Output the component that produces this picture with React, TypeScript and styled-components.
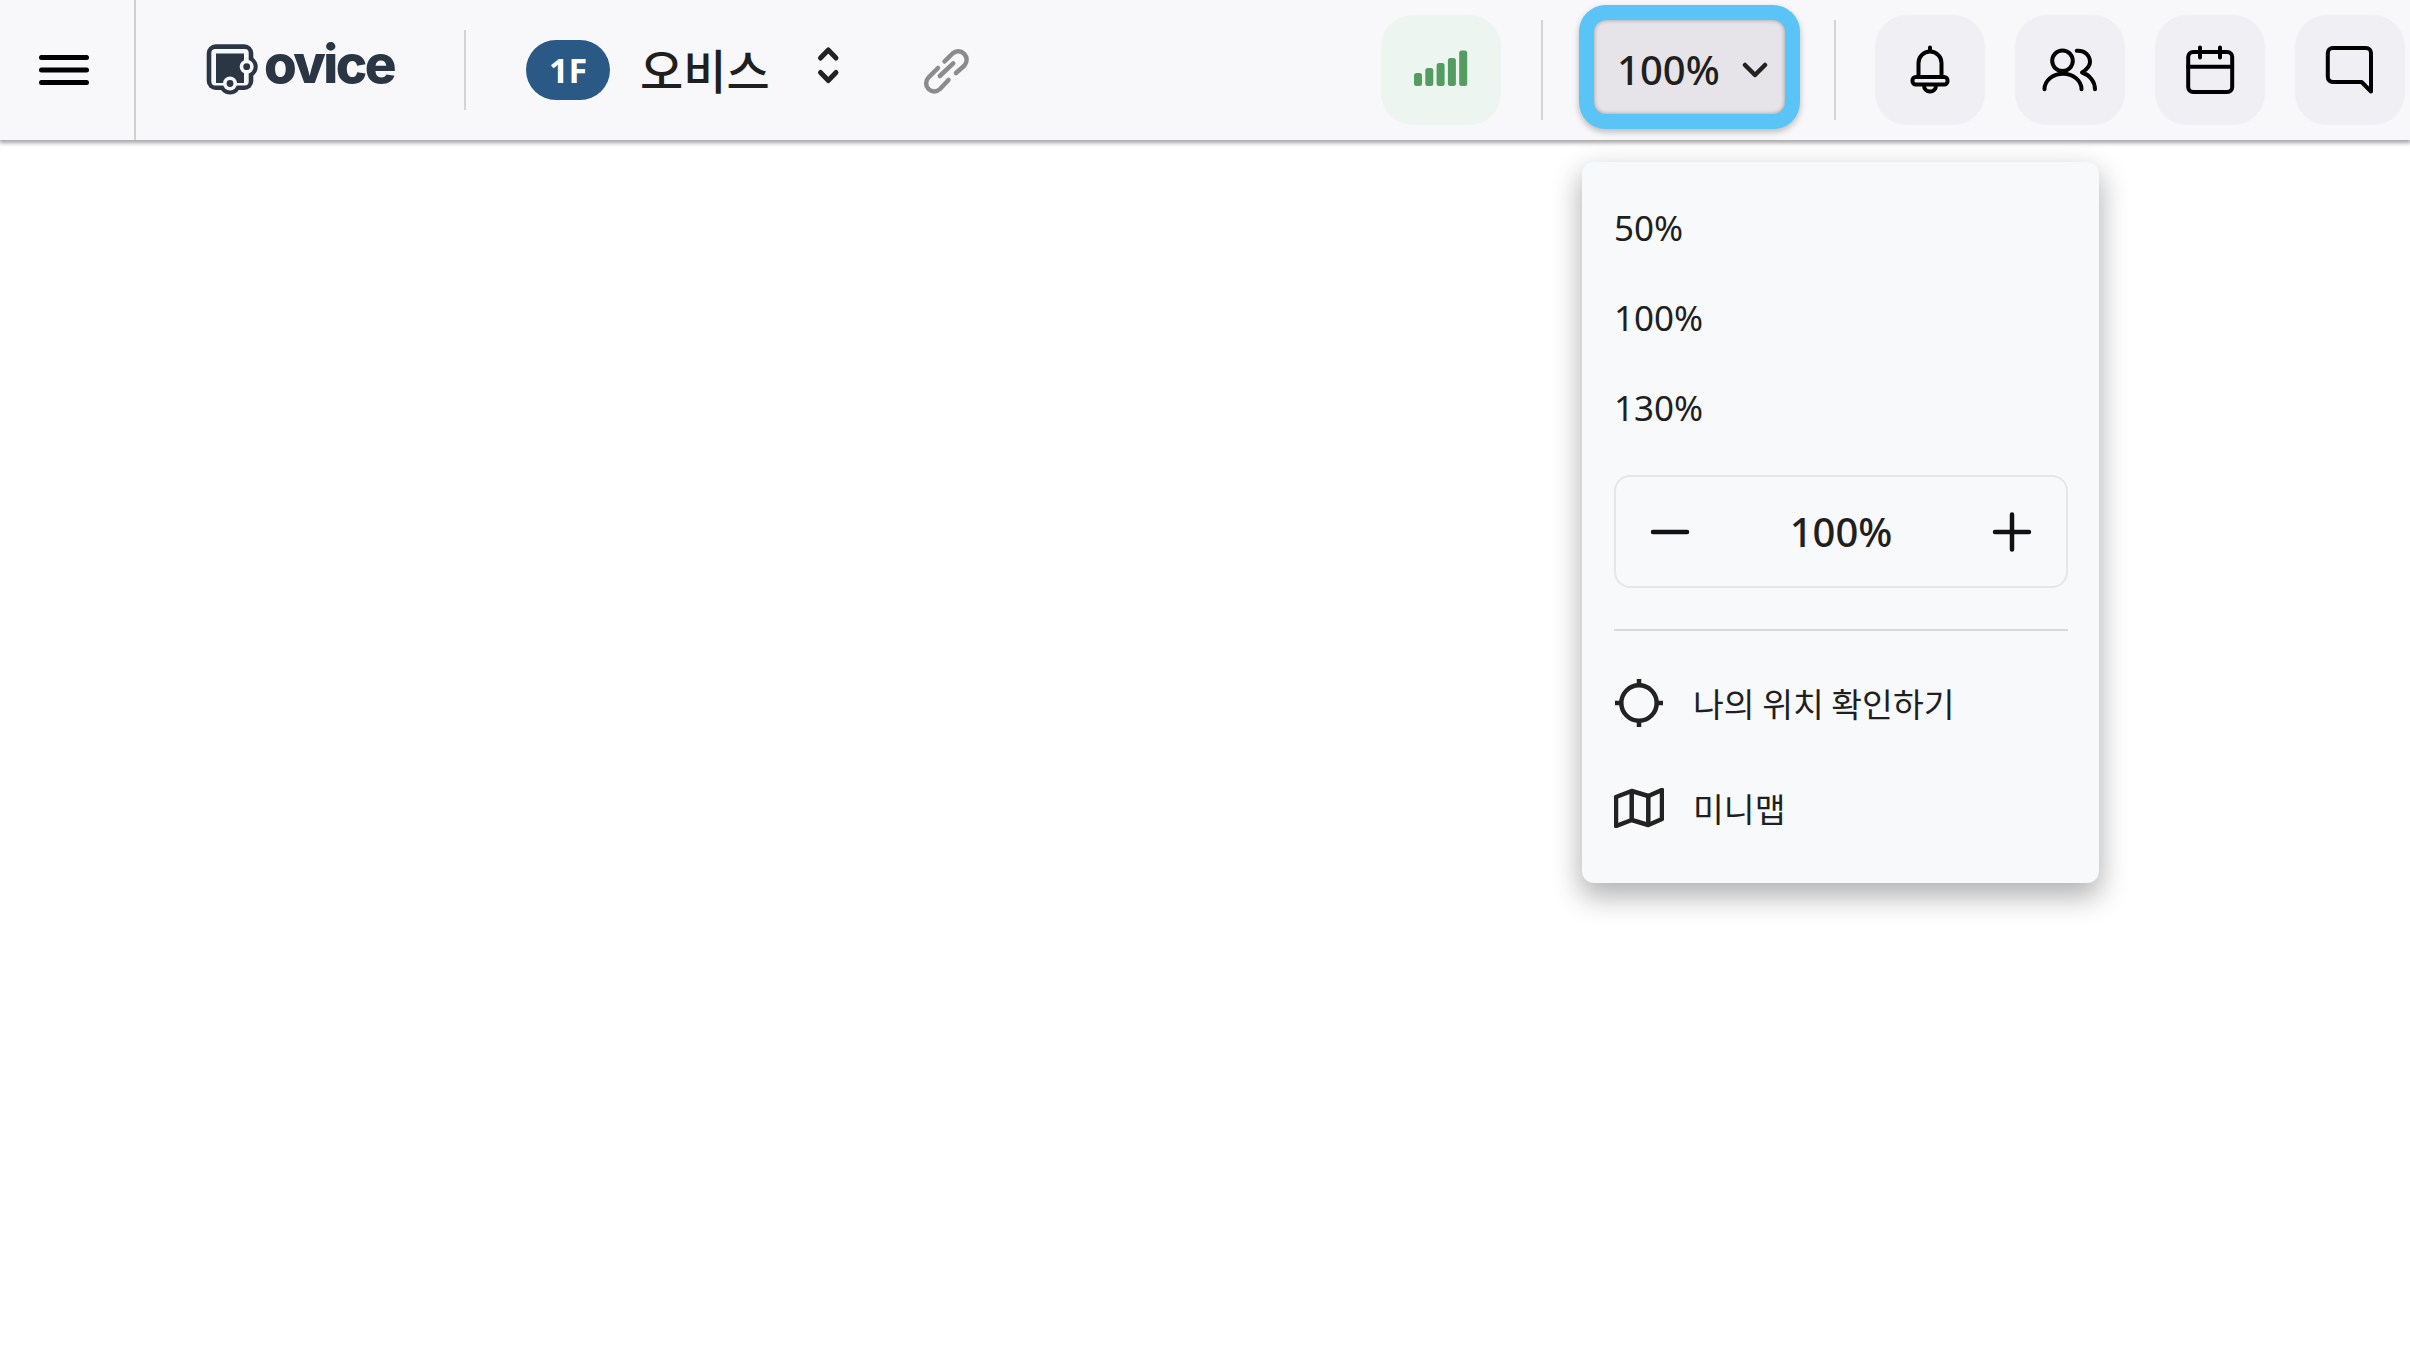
import styled, { createGlobalStyle } from "styled-components";

const GlobalStyle = createGlobalStyle`
  html, body {
    margin: 0;
    padding: 0;
    background: #fff;
    font-family: "Noto Sans", "Noto Sans CJK KR", sans-serif;
    color: #1f1f1f;
  }
`;

const Page = styled.div`
  width: 2410px;
  height: 1362px;
  overflow: hidden;
`;

const Header = styled.header`
  display: flex;
  align-items: center;
  justify-content: space-between;
  height: 140px;
  padding-right: 5px;
  background: #f8f8fb;
  box-shadow: 0 2px 4px 1px rgba(0, 0, 0, 0.35);
`;

const LeftGroup = styled.div`
  display: flex;
  align-items: center;
  height: 100%;
`;

const RightGroup = styled.div`
  display: flex;
  align-items: center;
  height: 100%;
`;

const MenuCell = styled.div`
  display: flex;
  align-items: center;
  justify-content: center;
  width: 128px;
  height: 100%;
  padding-right: 6px;
  border-right: 2px solid #cfcfcf;
`;

const Logo = styled.div`
  display: flex;
  align-items: flex-start;
  height: 52px;
  margin-left: 70px;
  width: 188px;
  flex-shrink: 0;
`;

const LogoMarkSvg = styled.svg`
  flex-shrink: 0;
`;

const LogoText = styled.span`
  font-family: "Inter", sans-serif;
  font-weight: 800;
  font-size: 53px;
  line-height: 52px;
  letter-spacing: -2.6px;
  color: #2b3645;
  margin-top: -6px;
`;

const Divider = styled.div<{ $h: number; $l: number; $r: number }>`
  width: 2px;
  height: ${(p) => p.$h}px;
  margin-left: ${(p) => p.$l}px;
  margin-right: ${(p) => p.$r}px;
  background: #d4d4d6;
`;

const FloorChip = styled.div`
  display: flex;
  align-items: center;
  justify-content: center;
  width: 84px;
  height: 60px;
  border-radius: 30px;
  background: #2a5985;
  color: #fff;
  font-size: 34px;
  font-weight: 700;
`;

const SpaceName = styled.div`
  margin-left: 30px;
  margin-bottom: 3px;
  font-size: 47px;
  line-height: 60px;
  font-weight: 500;
  font-family: "Noto Sans CJK KR", sans-serif;
`;

const SpaceSwitch = styled.svg`
  margin-left: 38px;
`;

const LinkIcon = styled.svg`
  margin-left: 69px;
`;

const IconButton = styled.div<{ $bg?: string; $w?: number }>`
  display: flex;
  align-items: center;
  justify-content: center;
  width: ${(p) => p.$w ?? 110}px;
  height: 110px;
  border-radius: 32px;
  background: ${(p) => p.$bg ?? "#f0eff3"};
`;

const IconRow = styled.div`
  display: flex;
  gap: 30px;
`;

const ZoomControl = styled.div`
  position: relative;
  margin-top: -6px;
`;

const ZoomButton = styled.div`
  display: flex;
  align-items: center;
  gap: 22px;
  box-sizing: border-box;
  width: 191px;
  height: 94px;
  padding: 5px 0 0 23px;
  border-radius: 12px;
  background: #e6e4e9;
  font-size: 40px;
  font-weight: 500;
  line-height: 80px;
  box-shadow: 0 0 0 15px #5bc4f7, 0 3px 6px 15px rgba(0, 0, 0, 0.25),
    inset 0 0 4px rgba(0, 0, 0, 0.35);
`;

const Menu = styled.div`
  position: absolute;
  top: 142px;
  left: -12px;
  z-index: 2;
  box-sizing: border-box;
  width: 517px;
  height: 721px;
  padding: 20px 31px 22px 32px;
  border-radius: 12px;
  background: #f8f9fb;
  box-shadow: 0 12px 28px 2px rgba(0, 0, 0, 0.3);
`;

const ZoomOption = styled.div`
  display: flex;
  align-items: center;
  height: 90px;
  font-size: 35px;
`;

const Stepper = styled.div`
  display: flex;
  align-items: center;
  justify-content: space-between;
  box-sizing: border-box;
  height: 113px;
  margin-top: 23px;
  padding: 0 34px 0 34px;
  border: 2px solid #e6e6ea;
  border-radius: 16px;
  font-size: 40px;
  font-weight: 500;
`;

const MenuDivider = styled.div`
  height: 2px;
  margin-top: 41px;
  margin-bottom: 19px;
  background: #d9d9dd;
`;

const ActionRow = styled.div`
  display: flex;
  align-items: center;
  gap: 29px;
  height: 105px;
  font-size: 33.5px;
  font-family: "Noto Sans CJK KR", sans-serif;
`;

const Menuicon = () => (
  <svg width="54" height="34" viewBox="0 0 54 34" fill="none" stroke="#000" strokeWidth="5" strokeLinecap="round">
    <path d="M4.5 4.5h45M4.5 17h45M4.5 29.5h45" />
  </svg>
);

const LogoMark = () => (
  <LogoMarkSvg width="58" height="52" viewBox="0 0 58 52">
    <rect x="0.7" y="0.3" width="46.6" height="45.7" rx="9" fill="#2b3645" />
    <circle cx="40.7" cy="22.7" r="11" fill="#2b3645" />
    <circle cx="24" cy="39.5" r="11" fill="#2b3645" />
    <rect x="5.3" y="5" width="37.4" height="36.4" rx="4" fill="#f8f8fb" />
    <rect x="10" y="9.5" width="28" height="29.5" fill="#2b3645" />
    <circle cx="40.7" cy="22.7" r="7" fill="#f8f8fb" />
    <circle cx="24" cy="39.5" r="7" fill="#f8f8fb" />
    <circle cx="40.7" cy="22.7" r="3.4" fill="#2b3645" />
    <circle cx="24" cy="39.5" r="3.4" fill="#2b3645" />
  </LogoMarkSvg>
);

const SignalIcon = () => (
  <svg width="56" height="40" viewBox="0 0 56 40" fill="#559c63">
    <rect x="1" y="23" width="8" height="13" rx="2.5" />
    <rect x="12.3" y="18" width="8" height="18" rx="2.5" />
    <rect x="23.6" y="13" width="8" height="23" rx="2.5" />
    <rect x="34.9" y="8" width="8" height="28" rx="2.5" />
    <rect x="46.2" y="0.5" width="8" height="35.5" rx="2.5" />
  </svg>
);

const BellIcon = () => (
  <svg width="60" height="60" viewBox="0 0 60 60" fill="none" stroke="#000" strokeWidth="4" strokeLinecap="round" strokeLinejoin="round">
    <path d="M30 7.5V11" />
    <path d="M18.5 36V23a11.5 11.5 0 0 1 23 0V36" />
    <rect x="12.5" y="37" width="35" height="7.5" rx="3.3" />
    <path d="M24 45.5a6 6 0 0 0 12 0" />
  </svg>
);

const UsersIcon = () => (
  <svg width="60" height="60" viewBox="0 0 60 60" fill="none" stroke="#000" strokeWidth="4" strokeLinecap="round" strokeLinejoin="round">
    <circle cx="22.5" cy="20.8" r="10.3" />
    <path d="M4.5 49.3A18.5 15.5 0 0 1 41.5 49.3" />
    <path d="M36.7 10.7C44 10 50 15 50 22C50 27 46 30 42 32.5C50 35 55 42 55 49.3" />
  </svg>
);

const CalendarIcon = () => (
  <svg width="60" height="60" viewBox="0 0 60 60" fill="none" stroke="#000" strokeWidth="4" strokeLinecap="round" strokeLinejoin="round">
    <rect x="8.2" y="12" width="44" height="40" rx="5" />
    <path d="M8.2 26.7H52.2M20 7.5V17.5M40 7.5V17.5" />
  </svg>
);

const ChatIcon = () => (
  <svg width="60" height="60" viewBox="0 0 60 60" fill="none" stroke="#000" strokeWidth="4" strokeLinecap="round" strokeLinejoin="round">
    <path d="M12.8 8H46a5 5 0 0 1 5 5V51.5L41.6 42H12.8a5 5 0 0 1-5-5V13a5 5 0 0 1 5-5Z" />
  </svg>
);

const CrosshairIcon = () => (
  <svg width="50" height="48" viewBox="0 0 50 48" fill="none" stroke="#222" strokeWidth="4.5">
    <circle cx="25" cy="24" r="17.7" />
    <path d="M25 0V7M25 41V48M1 24H8M42 24H49" />
  </svg>
);

const MapIcon = () => (
  <svg width="50" height="40" viewBox="0 0 50 40" fill="none" stroke="#222" strokeWidth="4.5" strokeLinejoin="round">
    <path d="M2 9L17.7 3L34.3 8L48 2V31L34.3 37L17.7 32L2 38Z" />
    <path d="M17.7 3V32M34.3 8V37" />
  </svg>
);

const MinusIcon = () => (
  <svg width="40" height="40" viewBox="0 0 40 40" fill="none" stroke="#111" strokeWidth="4.5" strokeLinecap="round">
    <path d="M3 20H37" />
  </svg>
);

const PlusIcon = () => (
  <svg width="40" height="40" viewBox="0 0 40 40" fill="none" stroke="#111" strokeWidth="4.5" strokeLinecap="round">
    <path d="M3 20H37M20 2.5V37.5" />
  </svg>
);

export default function App() {
  return (
    <Page>
      <GlobalStyle />
      <Header>
        <LeftGroup>
          <MenuCell>
            <Menuicon />
          </MenuCell>
          <Logo>
            <LogoMark />
            <LogoText>ovice</LogoText>
          </Logo>
          <Divider $h={80} $l={70} $r={60} />
          <FloorChip>1F</FloorChip>
          <SpaceName>오비스</SpaceName>
          <SpaceSwitch width="40" height="60" viewBox="0 0 40 60" fill="none" stroke="#222" strokeWidth="5" strokeLinecap="round" strokeLinejoin="round">
            <path d="M12.5 18L20.3 10L28 18M12.5 32.5L20.3 40.5L28 32.5" />
          </SpaceSwitch>
          <LinkIcon width="60" height="60" viewBox="0 0 60 60" fill="none" stroke="#8b8b8b" strokeWidth="4.5" strokeLinecap="round" strokeLinejoin="round">
            <path d="M27.5 21.5L35.5 13.5a8.5 8.5 0 0 1 12 12L39 33" />
            <path d="M21 28L11.5 37.5a8 8 0 0 0 11.5 11.5L31.5 40" />
            <path d="M22.8 36L36.2 23.3" />
          </LinkIcon>
        </LeftGroup>
        <RightGroup>
          <IconButton $bg="#ecf5f0" $w={120}>
            <SignalIcon />
          </IconButton>
          <Divider $h={100} $l={40} $r={51} />
          <ZoomControl>
            <ZoomButton>
              100%
              <svg width="26" height="16" viewBox="0 0 26 16" fill="none" stroke="#222" strokeWidth="4.5" strokeLinecap="round" strokeLinejoin="round">
                <path d="M3 3L13 13L23 3" />
              </svg>
            </ZoomButton>
            <Menu>
              <ZoomOption>50%</ZoomOption>
              <ZoomOption>100%</ZoomOption>
              <ZoomOption>130%</ZoomOption>
              <Stepper>
                <MinusIcon />
                100%
                <PlusIcon />
              </Stepper>
              <MenuDivider />
              <ActionRow>
                <CrosshairIcon />
                나의 위치 확인하기
              </ActionRow>
              <ActionRow>
                <MapIcon />
                미니맵
              </ActionRow>
            </Menu>
          </ZoomControl>
          <Divider $h={100} $l={49} $r={39} />
          <IconRow>
            <IconButton>
              <BellIcon />
            </IconButton>
            <IconButton>
              <UsersIcon />
            </IconButton>
            <IconButton>
              <CalendarIcon />
            </IconButton>
            <IconButton>
              <ChatIcon />
            </IconButton>
          </IconRow>
        </RightGroup>
      </Header>
    </Page>
  );
}
